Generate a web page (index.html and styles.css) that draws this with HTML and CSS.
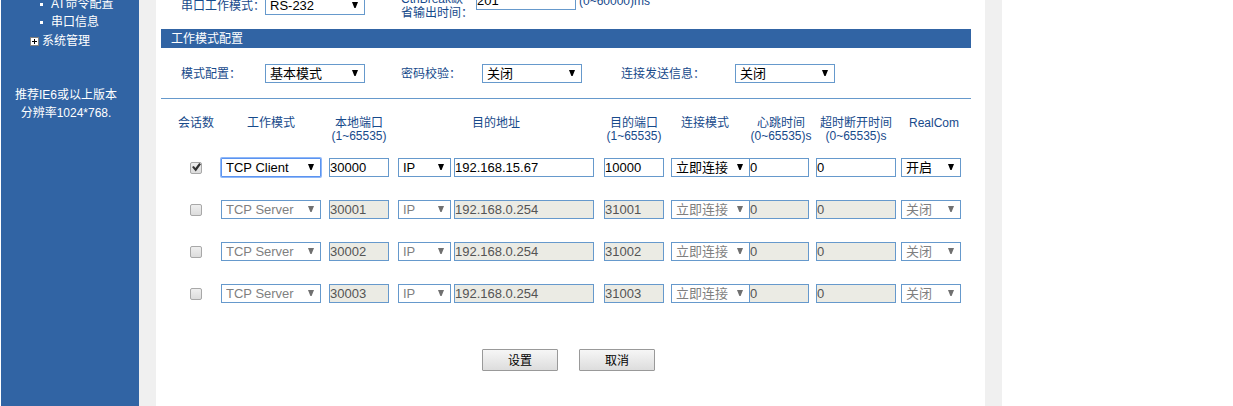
FILE: index.html
```html
<!DOCTYPE html>
<html lang="zh-CN">
<head>
<meta charset="utf-8">
<title>工作模式配置</title>
<link rel="stylesheet" href="styles.css">
</head>
<body>
<div class="page">
  <nav class="sidebar">
    <ul class="tree">
      <li class="leaf"><a href="#at">AT命令配置</a></li>
      <li class="leaf"><a href="#serial">串口信息</a></li>
      <li class="branch">
        <svg class="plus" viewBox="0 0 9 9" aria-hidden="true"><path fill="#808080" d="M0 0h9v9H0z"/><path fill="#fff" d="M1 1h7v7H1z"/><path fill="#000" d="M2 4h5v1H2zM4 2h1v5H4z"/></svg>
        <a href="#system">系统管理</a>
      </li>
    </ul>
    <p class="hint">推荐IE6或以上版本<br>分辨率1024*768.</p>
  </nav>
  <main class="content">
    <form class="form">
      <div class="fields serial">
        <label for="serial-mode">串口工作模式：</label>
        <span class="drop medium"><select id="serial-mode"><option>RS-232</option></select></span>
        <label for="brk">CtrlBreak缺<br>省输出时间：</label>
        <span class="with-unit"><input class="medium" id="brk" type="text" value="201"><span>(0~60000)ms</span></span>
      </div>
      <h2 class="bar">工作模式配置</h2>
      <div class="fields mode">
        <label for="mode">模式配置：</label>
        <span class="drop medium"><select id="mode"><option>基本模式</option></select></span>
        <label for="pwd">密码校验：</label>
        <span class="drop medium"><select id="pwd"><option>关闭</option></select></span>
        <label for="info">连接发送信息：</label>
        <span class="drop medium"><select id="info"><option>关闭</option></select></span>
      </div>
      <table class="sessions">
        <colgroup><col class="c-on"><col class="c-work"><col class="c-local"><col class="c-addr"><col class="c-port"><col class="c-conn"><col class="c-beat"><col class="c-time"><col class="c-real"></colgroup>
        <thead>
          <tr><th>会话数</th><th>工作模式</th><th>本地端口<br>(1~65535)</th><th>目的地址</th><th>目的端口<br>(1~65535)</th><th class="conn-head">连接模式</th><th>心跳时间<br>(0~65535)s</th><th>超时断开时间<br>(0~65535)s</th><th class="real-head">RealCom</th></tr>
        </thead>
        <tbody>
          <tr>
            <td><input type="checkbox" aria-label="会话 1" checked></td>
            <td><span class="drop medium active"><select aria-label="工作模式"><option>TCP Client</option></select></span></td>
            <td><input class="small" type="text" aria-label="本地端口" value="30000"></td>
            <td><div class="address"><span class="drop kind"><select aria-label="地址类型"><option>IP</option></select></span><input class="host" type="text" aria-label="目的地址" value="192.168.15.67"></div></td>
            <td><input class="small" type="text" aria-label="目的端口" value="10000"></td>
            <td class="start"><span class="drop conn"><select aria-label="连接模式"><option>立即连接</option></select></span></td>
            <td class="start"><input class="small" type="text" aria-label="心跳时间" value="0"></td>
            <td><input class="timeout" type="text" aria-label="超时断开时间" value="0"></td>
            <td><span class="drop small"><select aria-label="RealCom"><option>开启</option></select></span></td>
          </tr>
          <tr>
            <td><input type="checkbox" aria-label="会话 2"></td>
            <td><span class="drop medium off"><select aria-label="工作模式" disabled><option>TCP Server</option></select></span></td>
            <td><input class="small" type="text" aria-label="本地端口" value="30001" disabled></td>
            <td><div class="address"><span class="drop kind off"><select aria-label="地址类型" disabled><option>IP</option></select></span><input class="host" type="text" aria-label="目的地址" value="192.168.0.254" disabled></div></td>
            <td><input class="small" type="text" aria-label="目的端口" value="31001" disabled></td>
            <td class="start"><span class="drop conn off"><select aria-label="连接模式" disabled><option>立即连接</option></select></span></td>
            <td class="start"><input class="small" type="text" aria-label="心跳时间" value="0" disabled></td>
            <td><input class="timeout" type="text" aria-label="超时断开时间" value="0" disabled></td>
            <td><span class="drop small off"><select aria-label="RealCom" disabled><option>关闭</option></select></span></td>
          </tr>
          <tr>
            <td><input type="checkbox" aria-label="会话 3"></td>
            <td><span class="drop medium off"><select aria-label="工作模式" disabled><option>TCP Server</option></select></span></td>
            <td><input class="small" type="text" aria-label="本地端口" value="30002" disabled></td>
            <td><div class="address"><span class="drop kind off"><select aria-label="地址类型" disabled><option>IP</option></select></span><input class="host" type="text" aria-label="目的地址" value="192.168.0.254" disabled></div></td>
            <td><input class="small" type="text" aria-label="目的端口" value="31002" disabled></td>
            <td class="start"><span class="drop conn off"><select aria-label="连接模式" disabled><option>立即连接</option></select></span></td>
            <td class="start"><input class="small" type="text" aria-label="心跳时间" value="0" disabled></td>
            <td><input class="timeout" type="text" aria-label="超时断开时间" value="0" disabled></td>
            <td><span class="drop small off"><select aria-label="RealCom" disabled><option>关闭</option></select></span></td>
          </tr>
          <tr>
            <td><input type="checkbox" aria-label="会话 4"></td>
            <td><span class="drop medium off"><select aria-label="工作模式" disabled><option>TCP Server</option></select></span></td>
            <td><input class="small" type="text" aria-label="本地端口" value="30003" disabled></td>
            <td><div class="address"><span class="drop kind off"><select aria-label="地址类型" disabled><option>IP</option></select></span><input class="host" type="text" aria-label="目的地址" value="192.168.0.254" disabled></div></td>
            <td><input class="small" type="text" aria-label="目的端口" value="31003" disabled></td>
            <td class="start"><span class="drop conn off"><select aria-label="连接模式" disabled><option>立即连接</option></select></span></td>
            <td class="start"><input class="small" type="text" aria-label="心跳时间" value="0" disabled></td>
            <td><input class="timeout" type="text" aria-label="超时断开时间" value="0" disabled></td>
            <td><span class="drop small off"><select aria-label="RealCom" disabled><option>关闭</option></select></span></td>
          </tr>
        </tbody>
      </table>
      <div class="actions">
        <button type="submit">设置</button>
        <button type="reset">取消</button>
      </div>
    </form>
  </main>
</div>
</body>
</html>
```
FILE: styles.css
```css
* { box-sizing: border-box; }

body {
  margin: 0;
  background: #fff;
  color: #174a8b;
  font: 12px/14px "Liberation Sans", "Noto Sans CJK SC", sans-serif;
}

.page {
  display: flex;
  max-width: 1002px;
  min-height: 100vh;
  padding-left: 1px;
  overflow: hidden;
}

.sidebar {
  flex: 0 0 138px;
  background: #3164a4;
  color: #fff;
}

.sidebar a { color: inherit; text-decoration: none; }

.tree {
  list-style: none;
  margin: -5px 0 0;
  padding: 0;
  line-height: 18px;
}

.leaf { display: flex; align-items: center; gap: 8px; padding-left: 39px; }
.leaf::before { content: ""; width: 3px; height: 3px; background: #fff; }
.branch { display: flex; align-items: center; gap: 3px; padding: 1px 0 0 29px; }
.plus { width: 9px; height: 9px; }

.hint { margin: 36px 8px 0 0; line-height: 18px; text-align: center; }

.content {
  flex: 1;
  border: solid #f0f0f0;
  border-width: 0 17px;
  padding: 0 14px 0 5px;
}

.fields { display: grid; align-items: center; padding-left: 20px; }

label { padding-top: 1px; }

.serial {
  grid-template-columns: 84px 136px 75px 1fr;
  margin: -9px 0 9px;
}

.mode {
  grid-template-columns: 84px 136px 81px 139px 114px 1fr;
  padding: 16px 0 15px 20px;
  border-bottom: 1px solid #6699cc;
}

.with-unit { display: flex; align-items: center; align-self: start; gap: 3px; }

.bar {
  margin: 0;
  padding: 1px 0 0 10px;
  background: #3164a4;
  color: #fff;
  font-size: 12px;
  font-weight: normal;
  line-height: 18px;
}

select,
input[type="text"] {
  display: block;
  height: 19px;
  margin: 0;
  border: 1px solid #6699cc;
  border-radius: 0;
  background: #fff;
  color: #000;
  font: 13px/17px "Liberation Sans", "Noto Sans CJK SC", sans-serif;
  opacity: 1;
}

input[type="text"] { padding: 0; }
input[type="text"]:disabled { background: #ebebe4; color: #545454; }

select { width: 100%; padding: 0 4px; appearance: none; }
select:disabled { color: #7f7f7f; }

.drop { display: block; position: relative; color: #000; }
.drop::after {
  content: "";
  position: absolute;
  top: 6px;
  right: 7px;
  width: 6px;
  height: 6px;
  background: currentColor;
  clip-path: polygon(0 0, 100% 0, 60% 100%, 40% 100%);
  pointer-events: none;
}
.off { color: #707070; }
.active select { border-color: #5b93f0; border-radius: 1px; box-shadow: 0 0 0 1px #8fb8f8; }

.small { width: 60px; }
.medium { width: 100px; }
.kind { width: 53px; }
.host { width: 140px; }
.conn { width: 79px; }
.timeout { width: 80px; }

.sessions {
  width: 790px;
  margin: 18px 0 0 12px;
  border-collapse: collapse;
  table-layout: fixed;
}

.c-on { width: 46px; }
.c-work { width: 104px; }
.c-local { width: 72px; }
.c-addr { width: 202px; }
.c-port { width: 74px; }
.c-conn { width: 78px; }
.c-beat { width: 64px; }
.c-time { width: 86px; }
.c-real { width: 64px; }

th { padding: 0 0 4px; font-weight: normal; line-height: 13px; vertical-align: top; white-space: nowrap; }
.conn-head { padding-right: 10px; }
.real-head { padding-left: 6px; }

td { padding: 11px 0 12px; }
td > * { margin: 0 auto !important; }
.start > * { margin: 0 !important; }
.address { display: flex; justify-content: center; gap: 3px; }

input[type="checkbox"] {
  display: block;
  position: relative;
  width: 12px;
  height: 12px;
  appearance: none;
  border: 1px solid #a8a8a8;
  border-radius: 2px;
  background: linear-gradient(#efefef, #dcdcdc);
}

input[type="checkbox"]:checked::after {
  content: "";
  position: absolute;
  inset: 0 0 1px 1px;
  background: #333;
  clip-path: polygon(0 50%, 20% 38%, 38% 62%, 80% 5%, 100% 20%, 42% 100%);
}

.actions { display: flex; gap: 21px; margin: 34px 0 0 321px; }

button {
  width: 76px;
  height: 22px;
  padding: 1px 0 0;
  border: 1px solid #999;
  border-radius: 1px;
  background: linear-gradient(#f6f6f6, #dddddd);
  color: #000;
  font: inherit;
}
```
